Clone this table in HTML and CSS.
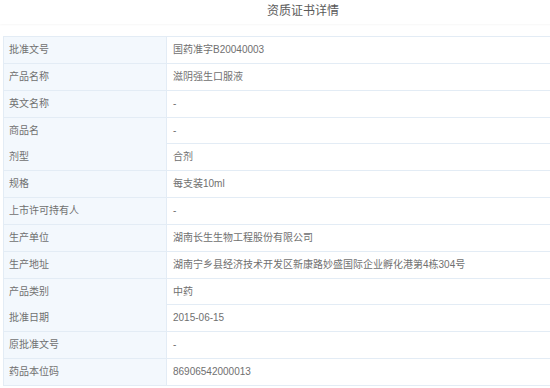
FILE: index.html
```html
<!DOCTYPE html>
<html lang="zh">
<head>
<meta charset="utf-8">
<title>资质证书详情</title>
<link rel="stylesheet" href="styles.css">
</head>
<body>
<div class="page">
  <div class="header">资质证书详情</div>
  <div class="table">
    <div class="row"><div class="label">批准文号</div><div class="value">国药准字B20040003</div></div>
    <div class="row"><div class="label">产品名称</div><div class="value">滋阴强生口服液</div></div>
    <div class="row"><div class="label">英文名称</div><div class="value">-</div></div>
    <div class="row"><div class="label">商品名</div><div class="value">-</div></div>
    <div class="row"><div class="label">剂型</div><div class="value">合剂</div></div>
    <div class="row"><div class="label">规格</div><div class="value">每支装10ml</div></div>
    <div class="row"><div class="label">上市许可持有人</div><div class="value">-</div></div>
    <div class="row"><div class="label">生产单位</div><div class="value">湖南长生生物工程股份有限公司</div></div>
    <div class="row"><div class="label">生产地址</div><div class="value">湖南宁乡县经济技术开发区新康路妙盛国际企业孵化港第4栋304号</div></div>
    <div class="row"><div class="label">产品类别</div><div class="value">中药</div></div>
    <div class="row"><div class="label">批准日期</div><div class="value">2015-06-15</div></div>
    <div class="row"><div class="label">原批准文号</div><div class="value">-</div></div>
    <div class="row"><div class="label">药品本位码</div><div class="value">86906542000013</div></div>
  </div>
</div>
</body>
</html>
```
FILE: styles.css
```css
html, body {
  margin: 0;
  padding: 0;
  background: #fff;
  overflow: hidden;
}
body {
  font-family: "Liberation Sans", "Noto Sans CJK SC", sans-serif;
  color: #707070;
}
.page {
  width: 600px;
  margin-left: 3px;
}
.header {
  height: 24px;
  line-height: 23px;
  text-align: center;
  font-size: 12px;
  color: #5a5a5a;
  box-shadow: 0 1px 2px rgba(0, 0, 0, 0.035);
  margin-left: -3px;
  padding-left: 3px;
}
.table {
  margin-top: 12px;
  border-top: 1px solid #e3ecf5;
  border-left: 1px solid #e3ecf5;
}
.row {
  display: grid;
  grid-template-columns: 163px 1fr;
  height: 25.85px;
  border-bottom: 1px solid #e3ecf5;
  font-size: 10px;
  line-height: 26px;
}
.label {
  background: #f3f8fd;
  border-right: 1px solid #e3ecf5;
  padding-left: 5px;
}
.value {
  padding-left: 6px;
}
```
